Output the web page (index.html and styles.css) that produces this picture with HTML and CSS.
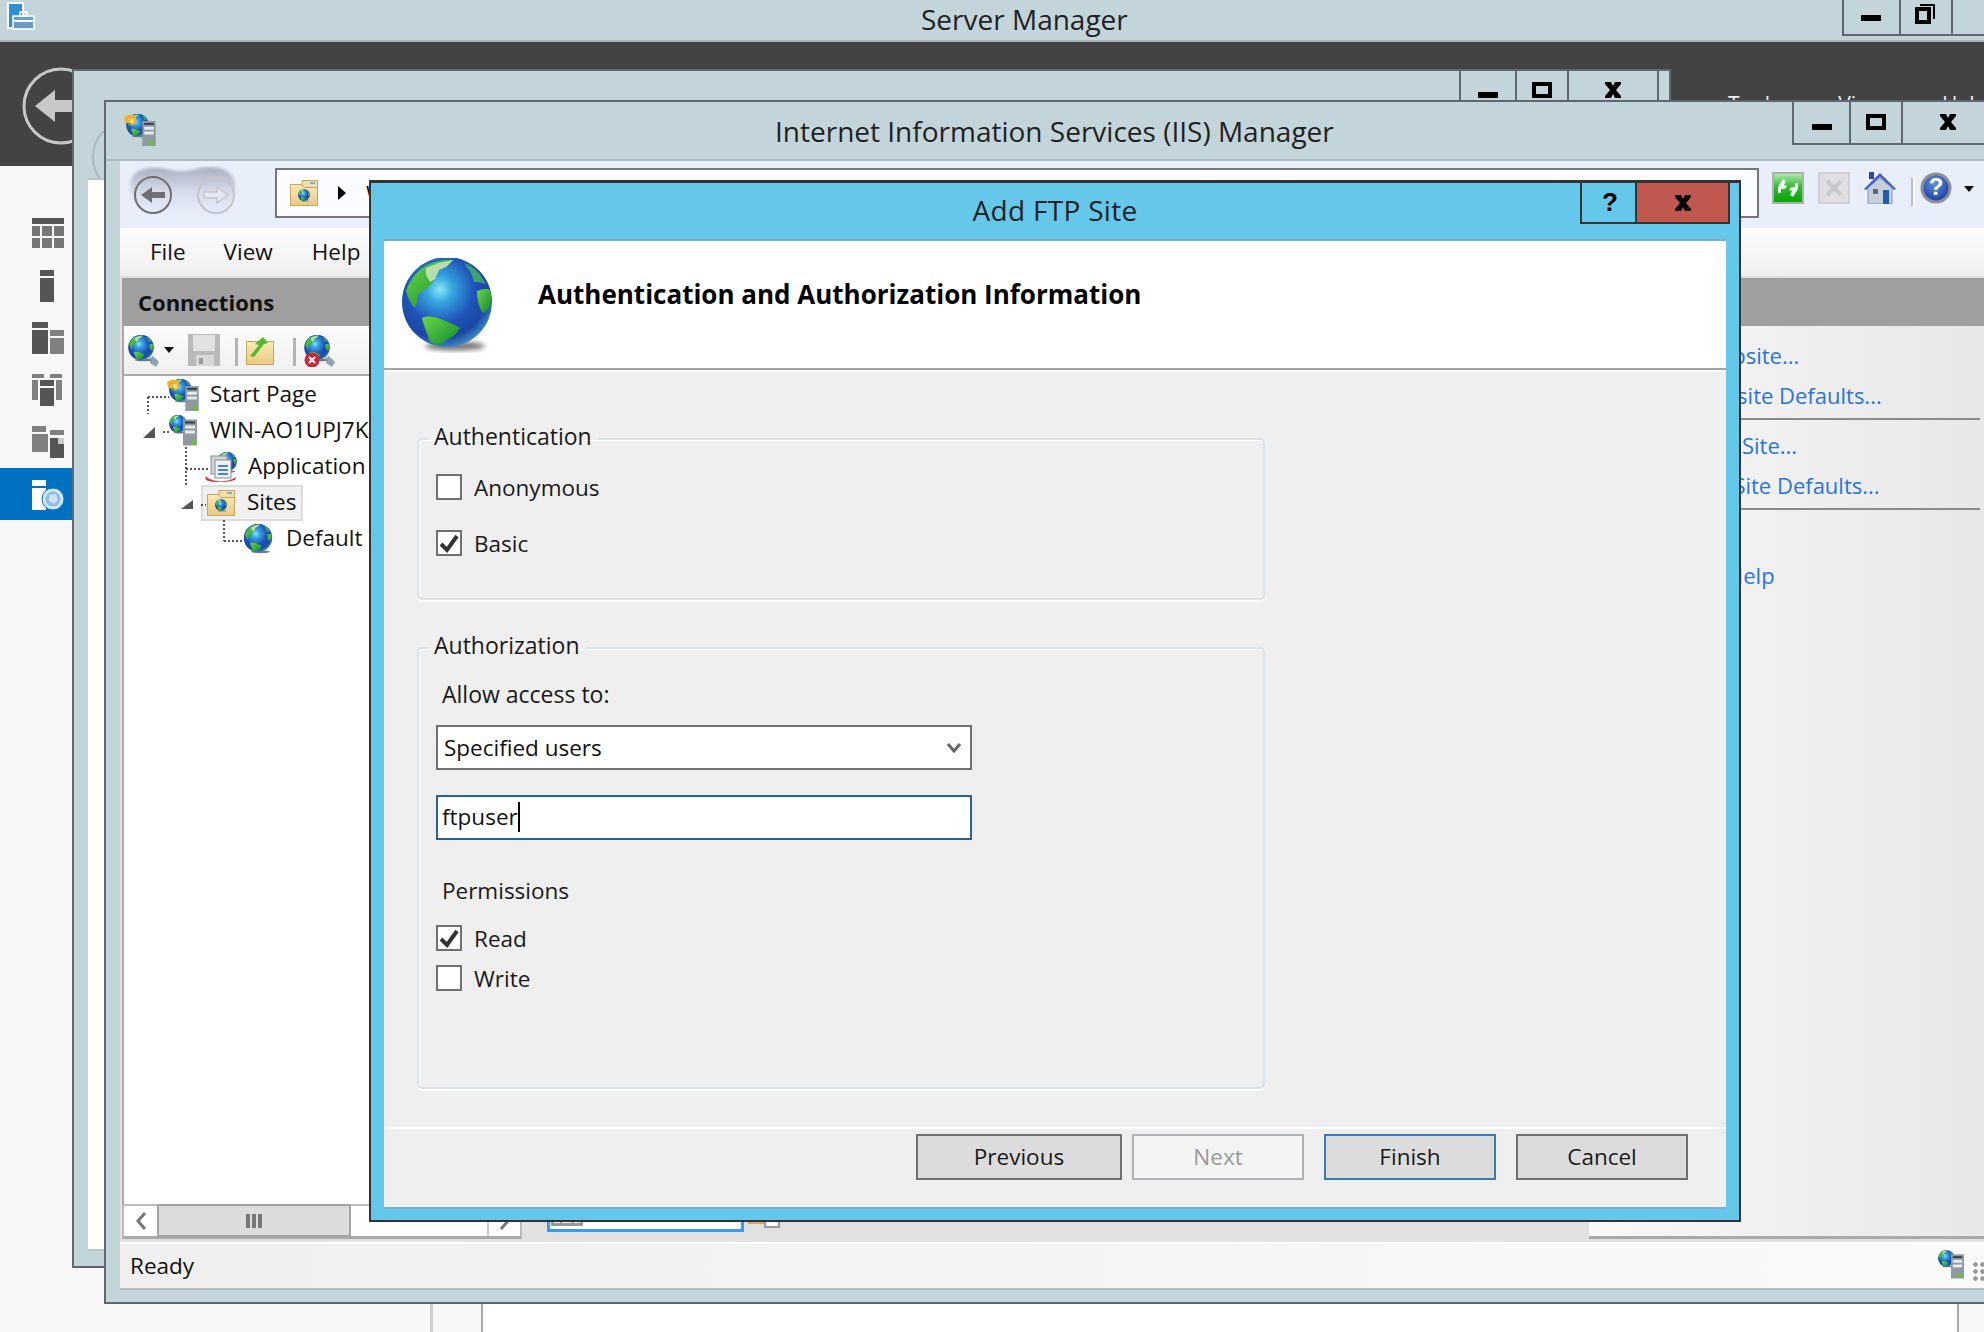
FILE: index.html
```html
<!DOCTYPE html>
<html lang="en">
<head>
<meta charset="utf-8">
<title>Add FTP Site</title>
<link rel="stylesheet" href="styles.css">
</head>
<body>
<svg class="defs" width="0" height="0" aria-hidden="true">
  <defs>
    <radialGradient id="ocean" cx="42%" cy="36%" r="66%">
      <stop offset="0" stop-color="#8be6f6"/>
      <stop offset=".22" stop-color="#35a5e0"/>
      <stop offset=".58" stop-color="#1f52b8"/>
      <stop offset=".82" stop-color="#1c46a4"/>
      <stop offset="1" stop-color="#3f8cc6"/>
    </radialGradient>
    <linearGradient id="land" x1="0" y1="0" x2="1" y2="1">
      <stop offset="0" stop-color="#6cd646"/>
      <stop offset="1" stop-color="#0f8a30"/>
    </linearGradient>
    <linearGradient id="folderfill" x1="0" y1="0" x2="0" y2="1">
      <stop offset="0" stop-color="#fbe9b4"/>
      <stop offset="1" stop-color="#e9c983"/>
    </linearGradient>
    <linearGradient id="greenbox" x1="0" y1="0" x2="0" y2="1">
      <stop offset="0" stop-color="#b4ecb4"/>
      <stop offset=".5" stop-color="#2cb52c"/>
      <stop offset="1" stop-color="#05a505"/>
    </linearGradient>
    <radialGradient id="helpfill" cx="45%" cy="35%" r="70%">
      <stop offset="0" stop-color="#5f8fe0"/>
      <stop offset="1" stop-color="#17389c"/>
    </radialGradient>
    <linearGradient id="capsule" x1="0" y1="0" x2="0" y2="1">
      <stop offset="0" stop-color="#a9afbe"/>
      <stop offset=".5" stop-color="#d6dbea"/>
      <stop offset="1" stop-color="#e8effb"/>
    </linearGradient>
    <filter id="soft" x="-30%" y="-100%" width="160%" height="300%"><feGaussianBlur stdDeviation="2.4"/></filter>
    <filter id="soft2" x="-10%" y="-10%" width="120%" height="120%"><feGaussianBlur stdDeviation="1.6"/></filter>
    <filter id="soft3" x="-10%" y="-10%" width="120%" height="120%"><feGaussianBlur stdDeviation=".7"/></filter>

    <symbol id="globe" viewBox="0 0 90 95">
      <ellipse cx="53" cy="88" rx="30" ry="4.5" fill="#777" filter="url(#soft)"/>
      <circle cx="45" cy="44" r="45" fill="url(#ocean)"/>
      <g filter="url(#soft3)">
        <path d="M4 33C7 23 15 12 27 6 35 3 44 1 52 2L44 9 37 12C34 18 33 23 27 28 23 32 18 34 16 37 15 42 15 46 13 50 9 46 6 40 4 33Z" fill="url(#land)"/>
        <path d="M24 10 36 5 51 2 44 9 37 12 33 21 28 24 24 17Z" fill="#b9ddae"/>
        <path d="M75 33C80 31 85 30 88 32 90 40 89 46 87 50L81 55C77 50 75 42 75 33Z" fill="url(#land)"/>
        <path d="M20 60C24 58 30 58 36 60 44 63 52 66 58 70 55 75 52 78 48 80L37 87C32 86 29 85 27 82 26 76 22 70 20 60Z" fill="url(#land)"/>
        <path d="M62 5C68 7 73 11 77 15L84 26 77 24 72 24 69 15Z" fill="#3f9f74"/>
      </g>
    </symbol>

    <symbol id="server" viewBox="0 0 14 26">
      <rect width="14" height="26" fill="#8f9aa0"/>
      <rect x="2" y="2" width="10" height="2" fill="#2f3f48"/>
      <rect x="2" y="6" width="10" height="3" fill="#e8ecee"/>
      <rect x="2" y="11" width="10" height="3" fill="#e8ecee"/>
      <rect x="8" y="21" width="4" height="4" fill="#62c81e"/>
    </symbol>

    <symbol id="iisicon" viewBox="0 0 32 32">
      <use href="#globe" x="2" y="0" width="23" height="24"/>
      <path d="M0 3 4 1H9L12 3V9L8 12 6 9H1Z" fill="#f2b02a"/>
      <path d="M5 5H10V9H7Z" fill="#ffe08a"/>
      <use href="#server" x="18" y="7" width="14" height="25"/>
    </symbol>

    <symbol id="servericon" viewBox="0 0 28 32">
      <use href="#globe" x="0" y="0" width="18" height="19"/>
      <use href="#server" x="14" y="3" width="14" height="29"/>
    </symbol>

    <symbol id="foldericon" viewBox="0 0 28 26">
      <path d="M12 .5H27.500V8H12Z" fill="#f4dfa8" stroke="#c9a45e"/>
      <rect x="20" y="2" width="5" height="2" fill="#6bb4ea"/>
      <path d="M.5 4.500H11L14 7.500H27.500V25.500H.5Z" fill="url(#folderfill)" stroke="#c9a45e"/>
      <use href="#globe" x="8" y="9" width="12" height="13"/>
    </symbol>

    <symbol id="connecticon" viewBox="0 0 32 32">
      <path d="M16 19 22 23 25 21 31 27 28 32 22 28 22 24Z" fill="#8ea4b2"/>
      <use href="#globe" x="0" y="0" width="26" height="27"/>
    </symbol>

    <symbol id="xmark" viewBox="0 0 18 16">
      <path d="M1 0H7L9 4 11 0H17V2L12 8 17 14V16H11L9 12 7 16H1V14L6 8 1 2Z" fill="#000"/>
    </symbol>
  </defs>
</svg>

<div class="sm-title">
  <svg class="sm-icon" width="32" height="30" viewBox="0 0 32 30" aria-hidden="true">
    <rect x="5" y="3" width="15" height="25" fill="#2d8fd8" stroke="#fff" stroke-width="2"/>
    <rect x="10" y="16" width="21" height="13" fill="#6c9ec4" stroke="#fff" stroke-width="1.500"/>
    <rect x="17" y="12" width="7" height="4" fill="none" stroke="#fff" stroke-width="1.500"/>
    <rect x="11" y="20" width="19" height="2" fill="#fff"/>
  </svg>
  <span class="sm-name">Server Manager</span>
  <div class="winbtns winbtns-top">
    <span class="wb wb-a"><svg width="20" height="6" aria-hidden="true"><rect width="20" height="6"/></svg></span>
    <span class="wb wb-b"><svg width="20" height="20" viewBox="0 0 20 20" aria-hidden="true"><path d="M5 1H19V15" fill="none" stroke="#000" stroke-width="2"/><rect x="2" y="5" width="12" height="13" fill="none" stroke="#000" stroke-width="4"/></svg></span>
    <span class="wb wb-c"></span>
  </div>
</div>

<div class="sm-band">
  <button class="back-btn" aria-label="Back">
    <svg width="80" height="80" viewBox="0 0 80 80" aria-hidden="true"><circle cx="40" cy="40" r="37" fill="none" stroke="#c8c8c8" stroke-width="3"/><path d="M14 40 34 24V34H66V46H34V56Z" fill="#c8c8c8"/></svg>
  </button>
  <span class="sm-menu">Tools</span><span class="sm-menu">View</span><span class="sm-menu">Help</span>
</div>

<div class="sm-body">
  <nav class="sm-nav">
    <div class="nav-item"><svg width="32" height="32" viewBox="0 0 32 32" aria-hidden="true"><rect width="32" height="6" fill="#555"/><path d="M0 8H8V18H0ZM10 8H20V18H10ZM22 8H32V18H22ZM0 20H8V30H0ZM10 20H20V30H10ZM22 20H32V30H22Z" fill="#777"/></svg></div>
    <div class="nav-item"><svg width="32" height="32" viewBox="0 0 32 32" aria-hidden="true"><path d="M8 0H22V6H8ZM8 8H22V32H8Z" fill="#555"/></svg></div>
    <div class="nav-item"><svg width="32" height="32" viewBox="0 0 32 32" aria-hidden="true"><path d="M0 0H16V6H0ZM0 8H16V32H0Z" fill="#555"/><path d="M18 8H32V14H18ZM18 16H32V32H18Z" fill="#808080"/></svg></div>
    <div class="nav-item"><svg width="32" height="32" viewBox="0 0 32 32" aria-hidden="true"><path d="M0 0H12V4H0ZM18 0H30V4H18ZM0 6H6V26H0ZM24 6H30V26H24Z" fill="#808080"/><path d="M8 6H22V12H8ZM8 14H22V32H8Z" fill="#555"/></svg></div>
    <div class="nav-item"><svg width="32" height="32" viewBox="0 0 32 32" aria-hidden="true"><path d="M0 0H14V6H0ZM0 8H16V26H0ZM18 4H32V9H18Z" fill="#808080"/><path d="M18 12H27L32 16V32H18Z" fill="#555"/><path d="M26 12 32 12V18H26Z" fill="#ccc"/></svg></div>
    <div class="nav-item nav-active"><svg width="32" height="32" viewBox="0 0 32 32" aria-hidden="true"><path d="M0 0H14V6H0ZM0 8H14V30H0Z" fill="#fff"/><circle cx="21" cy="19" r="11" fill="#d5e6f4" stroke="#0070c0" stroke-width="1"/><circle cx="21" cy="19" r="7.500" fill="#8dbce0"/><path d="M17 15 24 14 26 20 22 24 17 21Z" fill="#cfe2f2"/></svg></div>
  </nav>
  <div class="sm-lower">
    <span class="lower-a"></span>
    <span class="lower-b"></span>
    <span class="lower-c"></span>
    <span class="lower-d"></span>
  </div>
</div>

<section class="win win-behind">
  <header class="behind-title">
    <div class="winbtns winbtns-behind">
      <span class="wb wb-f"><svg width="20" height="6" aria-hidden="true"><rect width="20" height="6"/></svg></span>
      <span class="wb wb-g"><svg width="20" height="16" viewBox="0 0 20 16" aria-hidden="true"><rect x="2" y="2" width="16" height="12" fill="none" stroke="#000" stroke-width="4"/></svg></span>
      <span class="wb wb-h"><svg width="18" height="16" aria-hidden="true"><use href="#xmark"/></svg></span>
    </div>
  </header>
  <div class="behind-band">
    <svg class="behind-circle" width="80" height="80" viewBox="0 0 80 80" aria-hidden="true"><circle cx="40" cy="40" r="37" fill="none" stroke="#a9b7bd" stroke-width="2"/></svg>
  </div>
  <div class="behind-content"></div>
</section>

<section class="win win-iis">
  <header class="iis-title">
    <svg class="iis-logo" width="32" height="32" aria-hidden="true"><use href="#iisicon"/></svg>
    <h1 class="iis-name">Internet Information Services (IIS) Manager</h1>
    <div class="winbtns winbtns-iis">
      <span class="wb wb-i"><svg width="20" height="6" aria-hidden="true"><rect width="20" height="6"/></svg></span>
      <span class="wb wb-j"><svg width="20" height="16" viewBox="0 0 20 16" aria-hidden="true"><rect x="2" y="2" width="16" height="12" fill="none" stroke="#000" stroke-width="4"/></svg></span>
      <span class="wb wb-k"><svg width="18" height="16" aria-hidden="true"><use href="#xmark"/></svg></span>
    </div>
  </header>

  <div class="iis-client">
    <div class="iis-toolbar">
      <svg class="nav-capsule" width="108" height="52" viewBox="0 0 108 52" aria-hidden="true">
        <path d="M3 14C7 2 24 0 38 3 50 6 58 6 72 2 88 -1 104 3 107 16 109 32 100 46 84 50H24C8 46 0 30 3 14Z" fill="url(#capsule)" filter="url(#soft2)"/>
        <circle cx="25" cy="29" r="18" fill="none" stroke="#6f6f74" stroke-width="2"/>
        <path d="M13 29 24 21V26H37V32H24V37Z" fill="#6f6f74"/>
        <circle cx="88" cy="29" r="18" fill="none" stroke="#c4c6cc" stroke-width="2"/>
        <path d="M100 29 89 21V26H76V32H89V37Z" fill="#e4e8f2" stroke="#c4c6cc" stroke-width="1.500"/>
      </svg>
      <div class="address">
        <svg width="28" height="26" aria-hidden="true"><use href="#foldericon"/></svg>
        <span class="crumb-arrow"></span>
        <span class="crumb-text">WIN-AO1UPJ7K</span>
      </div>
      <svg class="tool-i tool-first" width="32" height="32" viewBox="0 0 32 32" aria-hidden="true"><rect x="1" y="1" width="30" height="30" fill="url(#greenbox)" stroke="#a9b4a9" stroke-width="2"/><path d="M6 15 11 7 14 9 12 13 15 14 13 17H9V21H6ZM26 17 21 25 18 23 20 19 17 18 19 15H23V11H26Z" fill="#fff" opacity=".92"/></svg>
      <svg class="tool-i" width="32" height="32" viewBox="0 0 32 32" aria-hidden="true"><rect x="1" y="1" width="30" height="30" fill="#e0e0e4" stroke="#cfcfd4" stroke-width="2"/><path d="M9 9 23 23M23 9 9 23" stroke="#c9c9cd" stroke-width="4"/></svg>
      <svg class="tool-i" width="32" height="32" viewBox="0 0 32 32" aria-hidden="true"><path d="M16 1 32 17 30 18 16 5 2 18 0 17Z" fill="#3f5ecb"/><rect x="5" y="0" width="5" height="7" fill="#2f43a8"/><path d="M4 16 16 6 28 16V32H4Z" fill="#c6d0dc" stroke="#8494a4"/><rect x="9" y="17" width="5" height="5" fill="#5c6a78"/><rect x="19" y="18" width="6" height="14" fill="#1f5fa8"/></svg>
      <span class="tool-sep"></span>
      <svg class="tool-help" width="32" height="32" viewBox="0 0 32 32" aria-hidden="true"><circle cx="16" cy="16" r="14" fill="url(#helpfill)" stroke="#8a8f9a" stroke-width="3"/><text class="help-q" x="16" y="23" text-anchor="middle">?</text></svg>
      <span class="drop-arrow tool-drop"></span>
    </div>

    <div class="iis-menu">
      <span class="menu-file">File</span>
      <span class="menu-view">View</span>
      <span class="menu-help">Help</span>
    </div>

    <div class="iis-main">
      <aside class="conn">
        <div class="band conn-band">Connections</div>
        <div class="conn-tools">
          <svg class="ct-globe" width="32" height="32" aria-hidden="true"><use href="#connecticon"/></svg>
          <span class="drop-arrow ct-drop"></span>
          <svg class="ct-floppy" width="32" height="32" viewBox="0 0 32 32" aria-hidden="true"><rect width="32" height="32" fill="#b9b9b9"/><rect x="5" y="1" width="22" height="16" fill="#e2e2e2"/><rect x="8" y="21" width="18" height="11" fill="#d8d8d8"/><rect x="11" y="24" width="4" height="6" fill="#9a9a9a"/></svg>
          <span class="ct-sep"></span>
          <svg class="ct-up" width="28" height="28" viewBox="0 0 28 28" aria-hidden="true"><path d="M.5 4.500H27.500V27.500H.5Z" fill="url(#folderfill)" stroke="#c9a45e"/><path d="M4 19 13 8 9 7 17 0 22 6 18 7 8 20Z" fill="#55b82c"/></svg>
          <span class="ct-sep ct-sep-b"></span>
          <svg class="ct-off" width="32" height="32" viewBox="0 0 32 32" aria-hidden="true"><use href="#connecticon"/><circle cx="8" cy="25" r="7.500" fill="#c8283a"/><path d="M5 22 11 28M11 22 5 28" stroke="#fff" stroke-width="2"/></svg>
        </div>
        <div class="tree">
          <svg class="tree-lines" width="120" height="180" viewBox="0 0 120 180" aria-hidden="true">
            <path class="dots" d="M24 21H45M24 21V38M39 56H45M62 71V109M62 93H84M77 129H82M100 144V165M100 165H120"/>
            <path class="tri" d="M19 62 31 51V62Z"/>
            <path class="tri" d="M57 133 69 124V133Z"/>
          </svg>
          <div class="row row-start"><svg width="32" height="32" aria-hidden="true"><use href="#iisicon"/></svg><span>Start Page</span></div>
          <div class="row row-server"><svg width="28" height="32" aria-hidden="true"><use href="#servericon"/></svg><span>WIN-AO1UPJ7K (WIN-AO1UPJ7K\Administrator)</span></div>
          <div class="row row-app">
            <svg width="32" height="30" viewBox="0 0 32 30" aria-hidden="true"><use href="#globe" x="12" y="0" width="20" height="21"/><rect x="6" y="4" width="16" height="18" fill="#cfd3d6" stroke="#8a8f92"/><rect x="10" y="8" width="16" height="18" fill="#eef0f2" stroke="#8a8f92"/><path d="M13 14H23M13 18H23M13 22H23" stroke="#4a86bf" stroke-width="2"/><path d="M0 24C8 31 22 31 31 25L30 28C20 31 8 31 1 28Z" fill="#d43a3a"/></svg>
            <span>Application Pools</span>
          </div>
          <div class="row row-sites"><span class="sites-pill"><svg width="28" height="26" aria-hidden="true"><use href="#foldericon"/></svg><span>Sites</span></span></div>
          <div class="row row-default"><svg width="30" height="30" aria-hidden="true"><use href="#globe"/></svg><span>Default Web Site</span></div>
        </div>
        <div class="hscroll">
          <span class="hs-btn"><svg width="12" height="20" viewBox="0 0 12 20" aria-hidden="true"><path d="M10 2 3 10 10 18" fill="none" stroke="#777" stroke-width="3"/></svg></span>
          <span class="hs-thumb"><svg width="16" height="14" aria-hidden="true"><path d="M0 0H4V14H0ZM6 0H10V14H6ZM12 0H16V14H12Z" fill="#777"/></svg></span>
          <span class="hs-track"></span>
          <span class="hs-btn hs-right"><svg width="12" height="20" viewBox="0 0 12 20" aria-hidden="true"><path d="M2 2 9 10 2 18" fill="none" stroke="#777" stroke-width="3"/></svg></span>
        </div>
      </aside>

      <div class="center">
        <div class="band"></div>
        <div class="center-body">
          <span class="tab-box"><span class="mini-a"></span></span>
          <span class="mini-b"></span>
        </div>
      </div>

      <aside class="actions">
        <div class="band"></div>
        <div class="act-list">
          <a class="act">Add Website...</a>
          <a class="act">Set Website Defaults...</a>
          <hr class="act-rule">
          <a class="act">Add FTP Site...</a>
          <a class="act">Set FTP Site Defaults...</a>
          <hr class="act-rule">
          <a class="act act-help">Help</a>
        </div>
      </aside>
    </div>

    <footer class="status">
      <span>Ready</span>
      <svg class="status-icon" width="26" height="32" aria-hidden="true"><use href="#servericon"/></svg>
      <span class="grip"></span>
    </footer>
  </div>
</section>

<section class="win dialog" role="dialog" aria-label="Add FTP Site">
  <header class="dlg-title">
    <span></span>
    <h2 class="dlg-name">Add FTP Site</h2>
    <div class="dlg-btns">
      <span class="dlg-help">?</span>
      <span class="dlg-close"><svg width="18" height="16" aria-hidden="true"><use href="#xmark"/></svg></span>
    </div>
  </header>
  <div class="dlg-inner">
    <div class="dlg-head">
      <svg class="dlg-globe" width="90" height="95" aria-hidden="true"><use href="#globe"/></svg>
      <h3 class="dlg-heading">Authentication and Authorization Information</h3>
    </div>
    <div class="dlg-body">
      <fieldset class="group group-auth">
        <legend>Authentication</legend>
        <label class="check"><span class="box"></span>Anonymous</label>
        <label class="check"><span class="box"><svg viewBox="0 0 22 22" aria-hidden="true"><path d="M3 12 9 18 19 4" fill="none" stroke="#333" stroke-width="4"/></svg></span>Basic</label>
      </fieldset>
      <fieldset class="group group-authz">
        <legend>Authorization</legend>
        <div class="lbl lbl-allow">Allow access to:</div>
        <div class="field field-select">
          <span>Specified users</span>
          <svg width="14" height="10" viewBox="0 0 14 10" aria-hidden="true"><path d="M1 1 7 8 13 1" fill="none" stroke="#666" stroke-width="3"/></svg>
        </div>
        <div class="field field-input"><span>ftpuser</span><i class="caret"></i></div>
        <div class="lbl lbl-perm">Permissions</div>
        <div class="perm-list">
          <label class="check"><span class="box"><svg viewBox="0 0 22 22" aria-hidden="true"><path d="M3 12 9 18 19 4" fill="none" stroke="#333" stroke-width="4"/></svg></span>Read</label>
          <label class="check"><span class="box"></span>Write</label>
        </div>
      </fieldset>
    </div>
    <footer class="dlg-foot">
      <button class="btn btn-prev">Previous</button>
      <button class="btn btn-next" disabled>Next</button>
      <button class="btn btn-finish">Finish</button>
      <button class="btn btn-cancel">Cancel</button>
    </footer>
  </div>
</section>
</body>
</html>
```

FILE: styles.css
```css
* { box-sizing: border-box; }
html, body { margin: 0; padding: 0; }
body {
  position: relative;
  width: 1984px;
  height: 1332px;
  overflow: hidden;
  background: #f7f7f7;
  color: #111;
  font-family: "Open Sans", "Noto Sans", sans-serif;
  font-size: 22.500px;
  display: flex;
  flex-direction: column;
}
h1, h2, h3 { margin: 0; font-weight: 400; }
.defs { position: absolute; }
svg { display: block; flex: none; }

/* Server Manager shell */
.sm-title {
  height: 42px;
  flex: none;
  background: #c3d5db;
  border-bottom: 2px solid #a9b2b6;
  display: flex;
  align-items: flex-start;
  position: relative;
}
.sm-icon { margin-left: 3px; }
.sm-name {
  position: absolute;
  left: 921px;
  top: 0;
  font-size: 28px;
  line-height: 38px;
  color: #222;
}
.winbtns { display: flex; }
.winbtns-top { margin-left: auto; margin-right: -60px; height: 36px; }
.wb {
  display: flex;
  align-items: center;
  justify-content: center;
  border-left: 2px solid #5f6770;
  border-bottom: 2px solid #5f6770;
}
.wb-a { width: 57px; padding: 2px 2px 0 0; }
.wb-b { width: 52px; padding: 0 2px 6px 0; }
.wb-c { width: 93px; }

.sm-band {
  height: 124px;
  flex: none;
  background: #434343;
  display: flex;
  align-items: flex-start;
}
.back-btn {
  margin: 24px 0 0 21px;
  padding: 0;
  border: 0;
  background: none;
  height: 80px;
}
.sm-menu {
  color: #eee;
  font-size: 21px;
  line-height: 24px;
  margin-top: 50px;
  margin-left: 58px;
}
.sm-menu:first-of-type { margin-left: 1627px; }

.sm-body { flex: 1; display: flex; }
.sm-nav {
  width: 72px;
  padding-top: 42px;
  flex: none;
}
.nav-item {
  height: 52px;
  padding: 10px 0 0 32px;
}
.nav-active { background: #0070c0; padding-top: 12px; }
.sm-lower {
  flex: 1;
  display: flex;
  height: 100%;
}
.lower-a { width: 361px; border-right: 3px solid #cfcfcf; }
.lower-b { width: 50px; border-right: 2px solid #a9a9a9; }
.lower-c { width: 1476px; background: #fff; border-right: 2px solid #a9a9a9; }
.lower-d { flex: 1; }

/* Windows on the desktop */
.win { position: absolute; }
.win-behind {
  left: 72px;
  top: 69px;
  width: 1599px;
  height: 1199px;
  background: #c3d5db;
  border: 2px solid #5f6770;
  display: flex;
  flex-direction: column;
}
.behind-title { height: 60px; flex: none; display: flex; justify-content: flex-end; }
.winbtns-behind { margin-right: 10px; height: 60px; }
.winbtns-behind .wb { align-items: flex-start; border-bottom: 0; padding-top: 11px; }
.wb-f { width: 56px; padding-top: 21px !important; }
.wb-g { width: 52px; }
.wb-h { width: 92px; border-right: 2px solid #5f6770; }
.behind-band { height: 47px; flex: none; padding: 0 0 0 16px; overflow: hidden; }
.behind-circle { margin-top: -14px; }
.behind-content {
  flex: 1;
  margin: 0 0 15px 14px;
  background: #fff;
  border-top: 2px solid #b9c3c8;
  border-bottom: 2px solid #b9c3c8;
}

.win-iis {
  left: 104px;
  top: 100px;
  width: 1960px;
  height: 1204px;
  background: #c3d5db;
  border: 2px solid #5f6770;
  display: flex;
  flex-direction: column;
}
.iis-title {
  height: 59px;
  flex: none;
  display: flex;
  align-items: flex-start;
  position: relative;
  border-bottom: 2px solid #aebcc2;
}
.iis-logo { margin: 12px 0 0 18px; }
.iis-name {
  position: absolute;
  left: 669px;
  top: 10px;
  font-size: 28px;
  line-height: 38px;
  color: #222;
}
.winbtns-iis { margin-left: auto; height: 43px; margin-right: 69px; }
.winbtns-iis .wb { border-bottom: 2px solid #5f6770; align-items: flex-start; padding-top: 12px; }
.wb-i { width: 57px; padding-top: 22px !important; }
.wb-j { width: 52px; }
.wb-k { width: 92px; }

.iis-client {
  flex: 1;
  margin: 0 0 12px 14px;
  display: flex;
  flex-direction: column;
  min-height: 0;
}
.iis-toolbar {
  height: 67px;
  flex: none;
  background: #e8effb;
  display: flex;
  align-items: flex-start;
  padding: 5px 0 0 8px;
}
.address {
  margin: 2px 0 0 39px;
  width: 1484px;
  height: 50px;
  background: #fbfcff;
  border: 2px solid #73777c;
  display: flex;
  align-items: center;
  padding-left: 13px;
  overflow: hidden;
}
.crumb-arrow {
  margin-left: 20px;
  width: 0;
  height: 0;
  border-left: 8px solid #000;
  border-top: 7px solid transparent;
  border-bottom: 7px solid transparent;
}
.crumb-text { margin-left: 20px; font-size: 22px; white-space: nowrap; }
.tool-i { margin: 6px 0 0 14px; }
.tool-first { margin-left: 13px; }
.tool-sep { margin: 12px 0 0 15px; width: 2px; height: 28px; background: #b8bcc4; box-shadow: 2px 0 #fff; }
.tool-help { margin: 6px 0 0 7px; }
.help-q { font-family: "Liberation Sans", sans-serif; font-weight: 700; font-size: 24px; fill: #fff; }
.drop-arrow {
  width: 0;
  height: 0;
  border-left: 5px solid transparent;
  border-right: 5px solid transparent;
  border-top: 6px solid #111;
}
.tool-drop { margin: 20px 0 0 12px; }

.iis-menu {
  height: 50px;
  flex: none;
  background: linear-gradient(#fdfdfd, #eeeeee);
  border-bottom: 2px solid #dedede;
  display: flex;
  align-items: center;
  padding-bottom: 2px;
  font-size: 22.500px;
}
.menu-file { margin-left: 30px; }
.menu-view { margin-left: 38px; }
.menu-help { margin-left: 39px; }

.iis-main {
  flex: 1;
  display: flex;
  background: #e1e1e1;
  min-height: 0;
}
.band {
  height: 48px;
  flex: none;
  background: #9f9f9f;
}
.conn {
  width: 400px;
  margin-left: 2px;
  flex: none;
  display: flex;
  flex-direction: column;
  margin-bottom: 3px;
}
.conn-band {
  font-weight: 700;
  font-size: 22px;
  line-height: 48px;
  padding-left: 16px;
  color: #111;
}
.conn-tools {
  height: 50px;
  flex: none;
  background: linear-gradient(#fcfcfc, #efefef);
  border-left: 2px solid #a9a9a9;
  border-bottom: 2px solid #a9a9a9;
  display: flex;
  align-items: center;
}
.ct-globe { margin-left: 4px; margin-top: 2px; }
.ct-drop { margin-left: 4px; }
.ct-floppy { margin-left: 14px; }
.ct-sep { width: 3px; height: 28px; background: #b4b4b4; margin: 4px 0 0 15px; }
.ct-up { margin-left: 8px; margin-top: 2px; }
.ct-sep-b { margin-left: 19px; }
.ct-off { margin-left: 8px; margin-top: 2px; }
.tree {
  flex: 1;
  min-height: 0;
  position: relative;
  background: #fff;
  border-left: 2px solid #a9a9a9;
  padding-top: 1px;
  overflow: hidden;
  white-space: nowrap;
}
.tree-lines { position: absolute; left: 0; top: 0; }
.dots { fill: none; stroke: #555; stroke-width: 2; stroke-dasharray: 2 2; }
.tri { fill: #555; }
.row { height: 36px; display: flex; align-items: center; font-size: 22.500px; }
.row span span, .row > span { padding-bottom: 4px; }
.sites-pill { padding-bottom: 0 !important; }
.row-start { padding-left: 43px; gap: 11px; }
.row-server { padding-left: 45px; gap: 13px; }
.row-app { padding-left: 81px; gap: 11px; }
.row-sites { padding-left: 77px; }
.sites-pill {
  height: 36px;
  width: 102px;
  background: #f0f0f0;
  border: 2px solid #dcdcdc;
  padding-left: 4px;
  display: flex;
  align-items: center;
  gap: 12px;
}
.row-default { padding-left: 119px; gap: 13px; }

.hscroll {
  height: 35px;
  flex: none;
  display: flex;
  background: #fff;
  border-bottom: 3px solid #a9a9a9;
  border-left: 2px solid #bbb;
  border-right: 2px solid #bbb;
  border-top: 2px solid #bbb;
}
.hs-btn {
  width: 33px;
  display: flex;
  align-items: center;
  justify-content: center;
  flex: none;
}
.hs-thumb {
  width: 194px;
  background: #dcdcdc;
  border: 2px solid #a4a4a4;
  margin-top: -2px;
  margin-bottom: -1px;
  display: flex;
  align-items: center;
  justify-content: center;
}
.hs-track { flex: 1; }
.hs-right { border-left: 2px solid #ccc; }

.center { width: 1067px; flex: none; display: flex; flex-direction: column; }
.center-body {
  flex: 1;
  display: flex;
  align-items: flex-end;
  padding: 0 0 10px 25px;
}
.tab-box {
  width: 197px;
  height: 60px;
  background: #fff;
  border: 3px solid #3a9af2;
  display: flex;
  align-items: flex-end;
  padding: 0 0 3px 1px;
}
.mini-a {
  width: 32px;
  height: 12px;
  border: 3px solid #999;
  border-top: 0;
  background: linear-gradient(90deg, transparent 6px, #999 6px, #999 8px, transparent 8px, transparent 18px, #999 18px, #999 20px, transparent 20px);
}
.mini-b {
  width: 16px;
  height: 16px;
  background: linear-gradient(#3a70c0 55%, #fff 55%);
  border: 2px solid #999;
  margin-bottom: 4px;
  margin-left: 20px;
  box-shadow: -16px -4px 0 0 #d0aa60;
}
.actions {
  flex: 1;
  display: flex;
  flex-direction: column;
  background: linear-gradient(90deg, #f8f8f8, #e4e4e4);
  border-bottom: 3px solid #a9a9a9;
  margin-bottom: 3px;
}
.act-list {
  padding-top: 9px;
  display: flex;
  flex-direction: column;
  overflow: hidden;
}
.act {
  color: #2a74d8;
  font-size: 22px;
  line-height: 40px;
  white-space: nowrap;
  margin-left: 64px;
}
.act-help { margin: 40px 0 0 138px; }
.act-rule {
  width: 391px;
  margin: 3px 0 5px;
  border: 0;
  border-top: 2px solid #8a8a8a;
}
.status {
  height: 48px;
  flex: none;
  background: linear-gradient(90deg, #efefef, #fafafa);
  display: flex;
  align-items: center;
  padding: 0 0 2px 10px;
  font-size: 22.500px;
  border-top: 2px solid #fff;
  border-bottom: 2px solid #b3bfc5;
}
.status-icon { margin-left: auto; margin-right: 8px; }
.grip {
  width: 30px;
  height: 20px;
  margin-top: 12px;
  background-image: radial-gradient(#999 2px, transparent 2.500px);
  background-size: 7px 7px;
  margin-right: 60px;
}

/* Add FTP Site dialog */
.dialog {
  left: 369px;
  top: 180px;
  width: 1372px;
  height: 1042px;
  background: #65c8ea;
  border: 2px solid #333;
  border-top-width: 3px;
  display: flex;
  flex-direction: column;
}
.dlg-title {
  height: 58px;
  flex: none;
  display: grid;
  grid-template-columns: 1fr auto 1fr;
  align-items: start;
}
.dlg-name {
  font-size: 28px;
  letter-spacing: .3px;
  line-height: 38px;
  margin-top: 8px;
  color: #222;
}
.dlg-btns {
  justify-self: end;
  margin-right: 9px;
  display: flex;
  height: 41px;
  border: 2px solid #333;
  border-top: 0;
}
.dlg-help {
  width: 55px;
  padding-left: 3px;
  border-right: 2px solid #333;
  font-family: "Liberation Sans", sans-serif;
  font-weight: 700;
  font-size: 26px;
  line-height: 38px;
  color: #000;
  text-align: center;
}
.dlg-close {
  width: 91px;
  background: #c0584f;
  display: flex;
  align-items: center;
  justify-content: center;
}
.dlg-inner {
  flex: 1;
  margin: 0 13px 13px;
  background: #efefef;
  display: flex;
  flex-direction: column;
  min-height: 0;
  box-shadow: 0 -2px 0 #7aadc7, 0 2px 0 #78b4d0;
}
.dlg-head {
  height: 127px;
  flex: none;
  background: #fff;
  display: flex;
  align-items: flex-start;
  box-shadow: 0 2px 0 #a3a3a3, 0 4px 0 #fff;
}
.dlg-globe { margin: 17px 0 0 18px; }
.dlg-heading {
  margin: 34px 0 0 46px;
  font-size: 26px;
  line-height: 38px;
  font-weight: 700;
  color: #000;
}
.dlg-body {
  flex: 1;
  padding: 53px 0 0 33px;
  min-height: 0;
}
.group {
  width: 848px;
  margin: 0;
  padding: 17px 17px 42px;
  border: 2px solid #dbe3e9;
  border-radius: 5px;
  box-shadow: inset 1px 1px 0 #fff, 0 2px 0 #fff;
  display: flex;
  flex-direction: column;
  gap: 30px;
  min-width: 0;
}
.group legend {
  margin-left: -8px;
  padding: 0 6px 6px;
  line-height: 30px;
  font-size: 23px;
  color: #1a1a1a;
}
.group-authz {
  margin-top: 30px;
  padding: 13px 17px 96px;
  gap: 0;
}
.check {
  display: flex;
  align-items: center;
  height: 26px;
  font-size: 22.500px;
  gap: 12px;
  color: #1a1a1a;
}
.box {
  width: 26px;
  height: 26px;
  flex: none;
  background: #fff;
  border: 2px solid #707070;
}
.lbl { padding-left: 6px; line-height: 30px; color: #1a1a1a; }
.lbl-allow { font-size: 23px; }
.field {
  height: 45px;
  width: 536px;
  background: #fff;
  border: 2px solid #707070;
  display: flex;
  align-items: center;
  font-size: 22.500px;
}
.field-select {
  margin-top: 16px;
  padding: 0 9px 0 6px;
  justify-content: space-between;
}
.field-input {
  margin-top: 25px;
  padding: 0 0 2px 4px;
  border-color: #2a6190;
}
.caret { width: 2px; height: 30px; background: #000; }
.lbl-perm { margin-top: 36px; }
.perm-list { margin-top: 19px; display: flex; flex-direction: column; gap: 14px; }
.dlg-foot {
  height: 80px;
  flex: none;
  border-top: 2px solid #fff;
  display: flex;
  justify-content: flex-end;
  align-items: flex-start;
  padding: 5px 38px 0 0;
}
.btn {
  height: 46px;
  width: 172px;
  padding: 0 0 2px;
  background: #dcdcdc;
  border: 2px solid #707070;
  font-family: inherit;
  font-size: 22.500px;
  color: #1a1a1a;
}
.btn-prev { width: 206px; margin-right: 10px; }
.btn-next { background: #f4f4f4; border-color: #adb2b5; color: #9a9a9a; margin-right: 20px; }
.btn-finish { border-color: #3d7bad; margin-right: 20px; }
```
